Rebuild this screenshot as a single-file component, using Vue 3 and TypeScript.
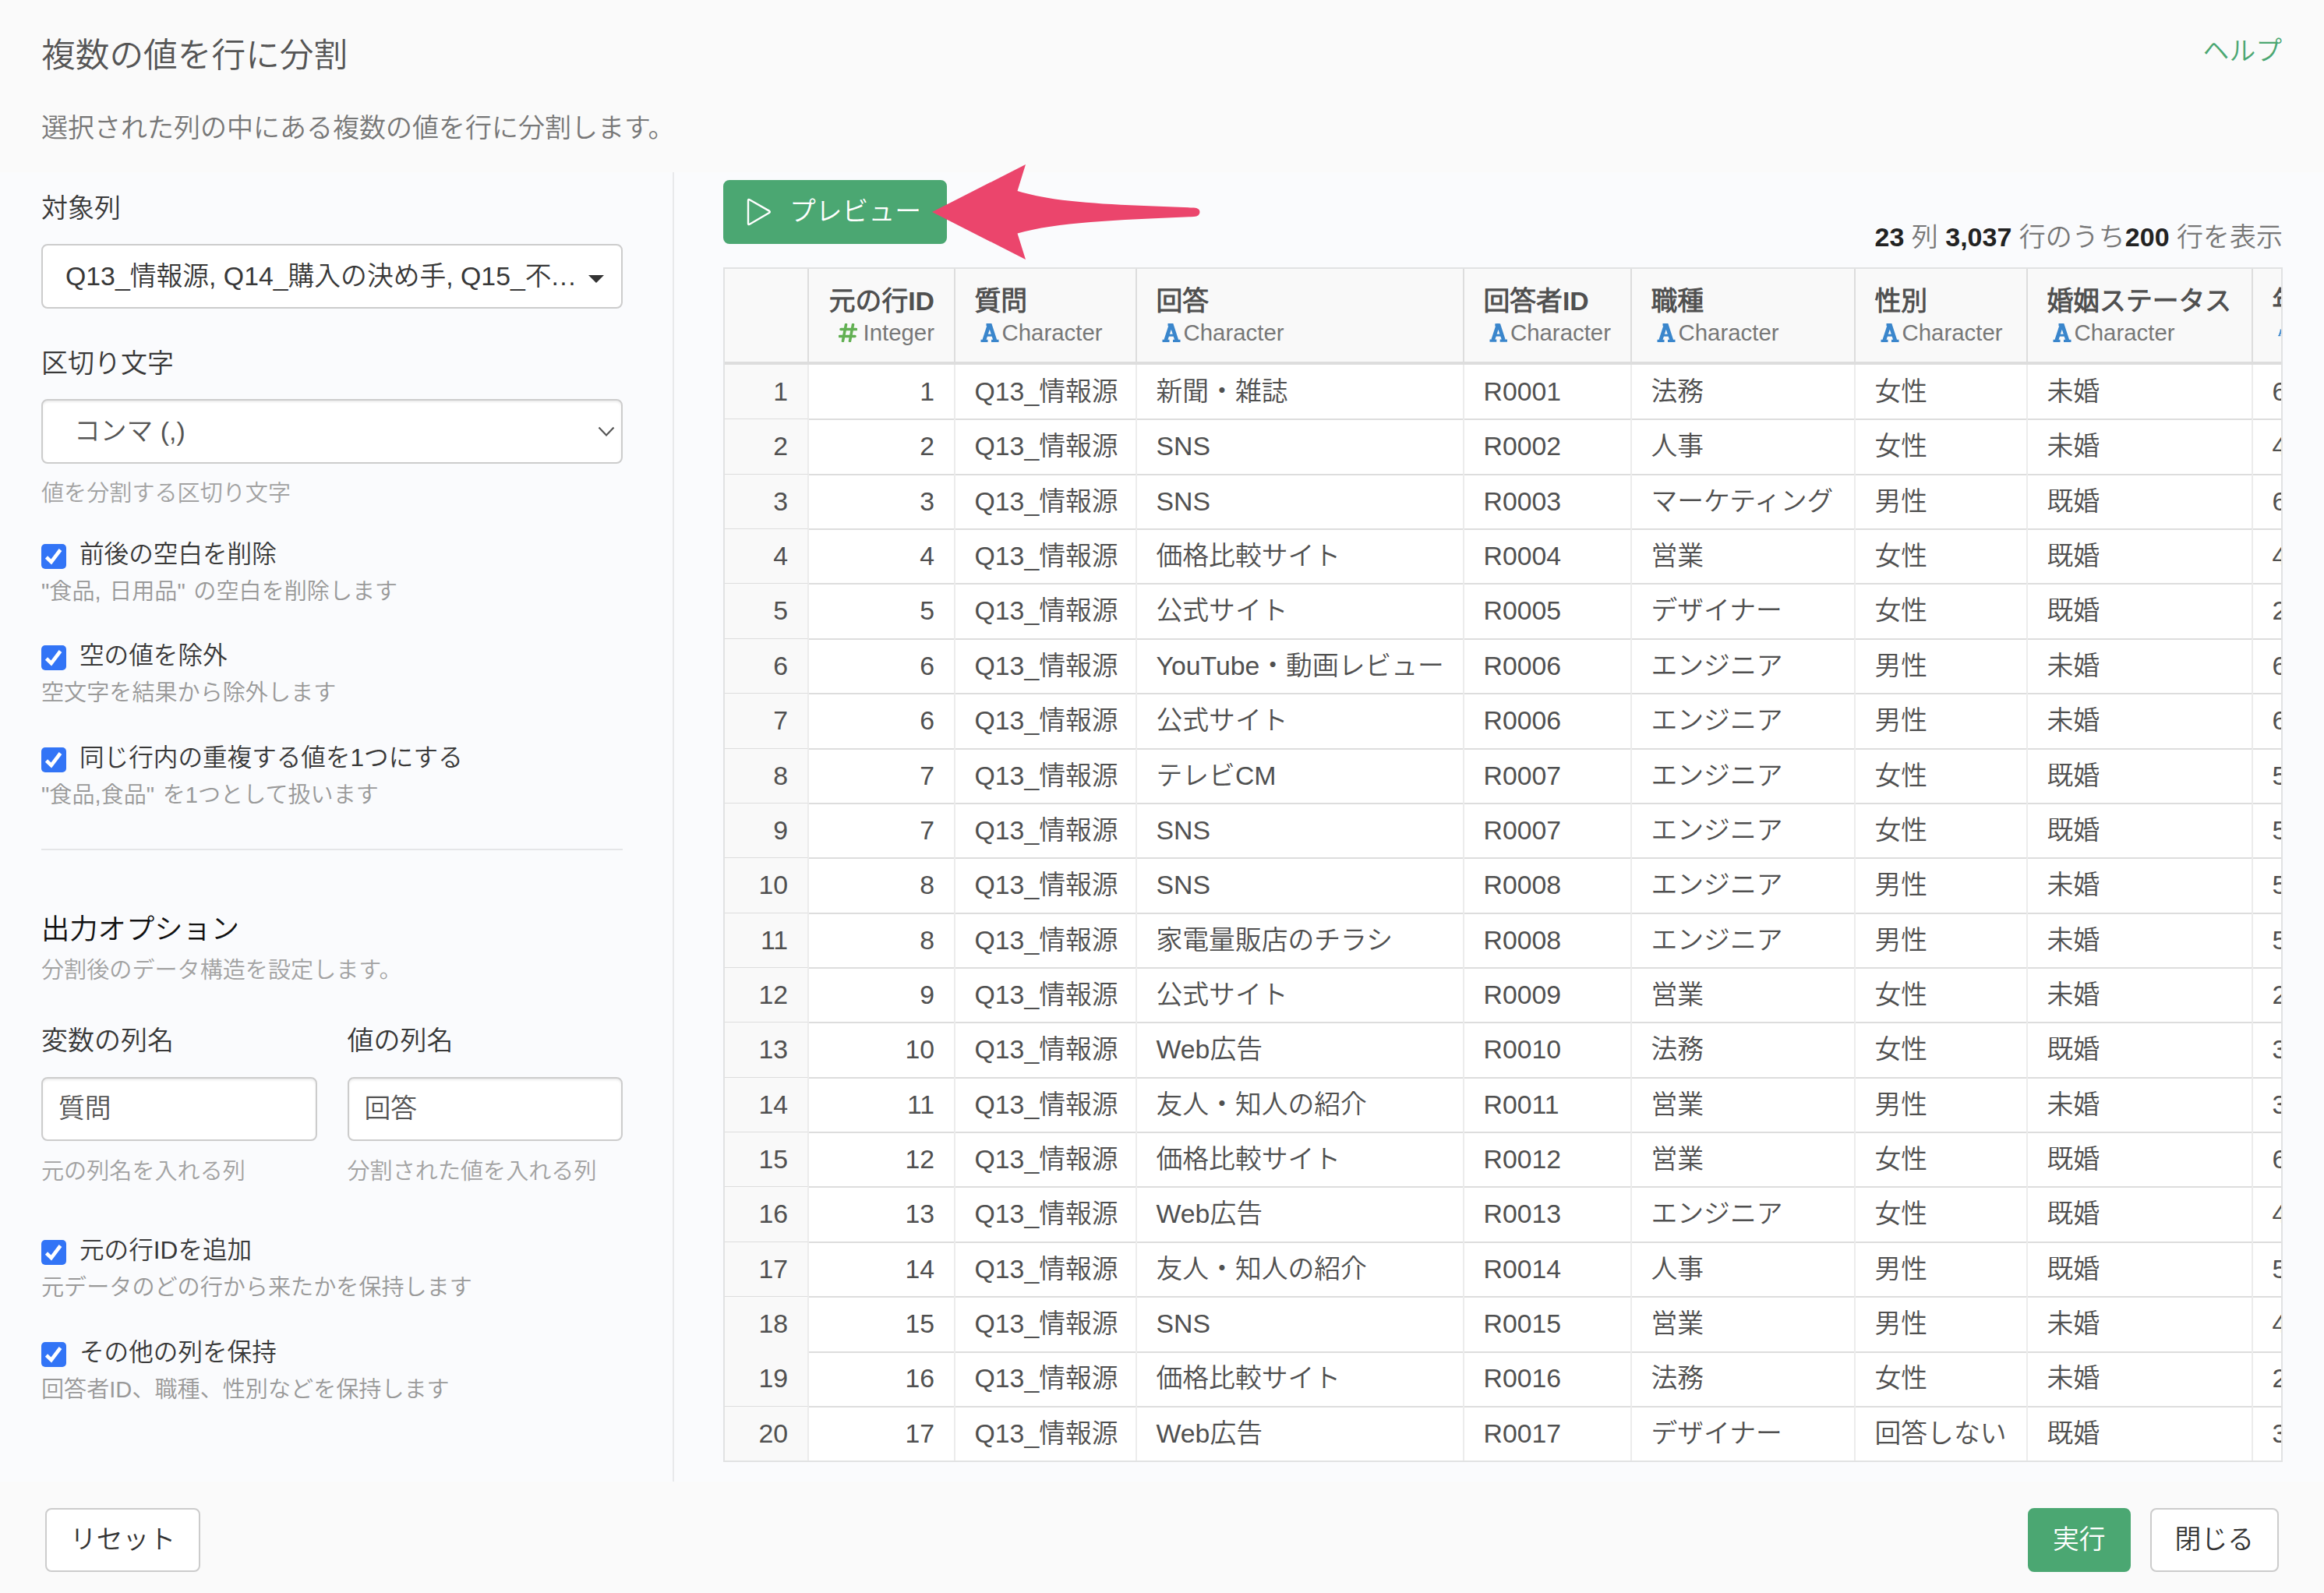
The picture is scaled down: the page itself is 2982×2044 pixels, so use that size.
<script setup lang="ts">
interface CheckOption {
  label: string
  hint: string
}
interface Column {
  name: string
  type: 'Integer' | 'Character'
}

const splitOptions: CheckOption[] = [
  { label: '前後の空白を削除', hint: '"食品, 日用品" の空白を削除します' },
  { label: '空の値を除外', hint: '空文字を結果から除外します' },
  { label: '同じ行内の重複する値を1つにする', hint: '"食品,食品" を1つとして扱います' },
]
const keepOptions: CheckOption[] = [
  { label: '元の行IDを追加', hint: '元データのどの行から来たかを保持します' },
  { label: 'その他の列を保持', hint: '回答者ID、職種、性別などを保持します' },
]
const nameFields = [
  { label: '変数の列名', value: '質問', hint: '元の列名を入れる列' },
  { label: '値の列名', value: '回答', hint: '分割された値を入れる列' },
]

const columns: Column[] = [
  { name: '元の行ID', type: 'Integer' },
  { name: '質問', type: 'Character' },
  { name: '回答', type: 'Character' },
  { name: '回答者ID', type: 'Character' },
  { name: '職種', type: 'Character' },
  { name: '性別', type: 'Character' },
  { name: '婚姻ステータス', type: 'Character' },
  { name: '年代', type: 'Character' },
]

const records: [number, string, string, string, string, string][] = [
  [1, '新聞・雑誌', '法務', '女性', '未婚', '60代'],
  [2, 'SNS', '人事', '女性', '未婚', '40代'],
  [3, 'SNS', 'マーケティング', '男性', '既婚', '60代'],
  [4, '価格比較サイト', '営業', '女性', '既婚', '40代'],
  [5, '公式サイト', 'デザイナー', '女性', '既婚', '20代'],
  [6, 'YouTube・動画レビュー', 'エンジニア', '男性', '未婚', '60代'],
  [6, '公式サイト', 'エンジニア', '男性', '未婚', '60代'],
  [7, 'テレビCM', 'エンジニア', '女性', '既婚', '50代'],
  [7, 'SNS', 'エンジニア', '女性', '既婚', '50代'],
  [8, 'SNS', 'エンジニア', '男性', '未婚', '50代'],
  [8, '家電量販店のチラシ', 'エンジニア', '男性', '未婚', '50代'],
  [9, '公式サイト', '営業', '女性', '未婚', '20代'],
  [10, 'Web広告', '法務', '女性', '既婚', '30代'],
  [11, '友人・知人の紹介', '営業', '男性', '未婚', '30代'],
  [12, '価格比較サイト', '営業', '女性', '既婚', '60代'],
  [13, 'Web広告', 'エンジニア', '女性', '既婚', '40代'],
  [14, '友人・知人の紹介', '人事', '男性', '既婚', '50代'],
  [15, 'SNS', '営業', '男性', '未婚', '40代'],
  [16, '価格比較サイト', '法務', '女性', '未婚', '20代'],
  [17, 'Web広告', 'デザイナー', '回答しない', '既婚', '30代'],
]
const rows = records.map(([id, answer, job, gender, marital, age]) => [
  String(id),
  'Q13_情報源',
  answer,
  'R' + String(id).padStart(4, '0'),
  job,
  gender,
  marital,
  age,
])
</script>

<template>
  <div class="dialog">
    <header class="head">
      <div>
        <h1 class="title">複数の値を行に分割</h1>
        <p class="lead">選択された列の中にある複数の値を行に分割します。</p>
      </div>
      <a class="help">ヘルプ</a>
    </header>

    <main class="body">
      <section class="settings">
        <div class="label">対象列</div>
        <div class="control dropdown">
          <span>Q13_情報源, Q14_購入の決め手, Q15_不<span class="dots">...</span></span>
          <svg class="caret" viewBox="0 0 20 10"><path d="M0 0H20L10 10Z" fill="#333" /></svg>
        </div>

        <div class="label second">区切り文字</div>
        <div class="control select inset">
          <span>コンマ (,)</span>
          <svg class="chevron" viewBox="0 0 22 14">
            <path d="M1.5 1.5L11 11.5L20.5 1.5" fill="none" stroke="#555" stroke-width="2.2" />
          </svg>
        </div>
        <div class="hint under-select">値を分割する区切り文字</div>

        <div class="checks">
          <div v-for="o in splitOptions" :key="o.label" class="check">
            <div class="check-row">
              <span class="box">
                <svg viewBox="0 0 32 32"><path d="M6.500 17L12.800 23L24.500 7.500" /></svg>
              </span>
              <span>{{ o.label }}</span>
            </div>
            <div class="hint">{{ o.hint }}</div>
          </div>
        </div>

        <div class="rule"></div>
        <h2 class="group">出力オプション</h2>
        <div class="hint group-hint">分割後のデータ構造を設定します。</div>

        <div class="fields">
          <div v-for="f in nameFields" :key="f.label" class="field">
            <div class="label">{{ f.label }}</div>
            <div class="control input inset">{{ f.value }}</div>
            <div class="hint">{{ f.hint }}</div>
          </div>
        </div>

        <div class="checks keep">
          <div v-for="o in keepOptions" :key="o.label" class="check">
            <div class="check-row">
              <span class="box">
                <svg viewBox="0 0 32 32"><path d="M6.500 17L12.800 23L24.500 7.500" /></svg>
              </span>
              <span>{{ o.label }}</span>
            </div>
            <div class="hint">{{ o.hint }}</div>
          </div>
        </div>
      </section>

      <section class="result">
        <div class="toolbar">
          <div class="btn primary preview">
            <svg class="play" viewBox="0 0 32 36">
              <path d="M2 3.2Q2 1.2 3.8 2.2L29 16.6Q30.6 17.8 29 19L3.8 33.8Q2 34.8 2 32.8Z" />
            </svg>
            <span>プレビュー</span>
            <svg class="arrow" viewBox="0 0 344 122">
              <path
                d="M0 61L120 0L109.5 34C160 50 240 52 336 55.5Q343.5 56 343.5 61Q343.5 66.500 336 67C240 71 160 74 109.500 88.500L120 122Z"
              />
            </svg>
          </div>
          <div class="count"><b>23</b> 列 <b>3,037</b> 行のうち<b>200</b> 行を表示</div>
        </div>

        <div class="grid">
          <div class="tr th">
            <div class="td"></div>
            <div v-for="(c, i) in columns" :key="c.name" class="td" :class="{ num: i === 0 }">
              <div class="name">{{ c.name }}</div>
              <div class="type">
                <svg v-if="c.type === 'Integer'" class="hash" viewBox="0 0 24 24">
                  <path d="M9.500 1.500L5.500 22.500M18.500 1.500L14.500 22.500M3 7.500H22.500M1.500 16.500H21" />
                </svg>
                <!-- slab "font" icon for text columns -->
                <svg v-else class="alpha" viewBox="0 0 24 24">
                  <path class="stem" d="M4.800 21.500L11 2.500H12.600L18.800 21.500" />
                  <path class="bar" d="M7.500 15.200H16.500" />
                  <path class="slab" d="M0.500 22.300H9.500M14 22.300H23.500M7.500 1.700H13" />
                </svg>
                <span>{{ c.type }}</span>
              </div>
            </div>
          </div>
          <div v-for="(r, n) in rows" :key="n" class="tr">
            <div class="td">{{ n + 1 }}</div>
            <div v-for="(v, i) in r" :key="i" class="td" :class="{ num: i === 0 }">{{ v }}</div>
          </div>
        </div>
      </section>
    </main>

    <footer class="foot">
      <div class="btn">リセット</div>
      <div class="foot-right">
        <div class="btn primary">実行</div>
        <div class="btn">閉じる</div>
      </div>
    </footer>
  </div>
</template>

<style>
body {
  margin: 0;
  background: #fafafa;
}
</style>

<style scoped>
.dialog {
  width: 2982px;
  height: 2044px;
  box-sizing: border-box;
  overflow: hidden;
  display: flex;
  flex-direction: column;
  background: #fafafa;
  color: #383838;
  font-family: 'Liberation Sans', 'Noto Sans CJK JP DemiLight', 'Noto Sans CJK JP', sans-serif;
  font-weight: 350;
  font-size: 33.8px;
  white-space: nowrap;
}
.dialog * {
  box-sizing: border-box;
}
.head {
  height: 221px;
  padding: 41px 54px 0 53px;
  display: flex;
  justify-content: space-between;
  align-items: flex-start;
}
.title {
  margin: 0;
  font-size: 43.7px;
  line-height: 60px;
  font-weight: 350;
  color: #555;
}
.lead {
  margin: 39px 0 0;
  font-size: 34px;
  line-height: 48px;
  color: #777;
}
.help {
  line-height: 48px;
  color: #4ba772;
}
.body {
  height: 1680px;
  display: flex;
  background: #fafbfd;
}
.settings {
  width: 865px;
  padding: 22.5px 64px 0 53px;
  border-right: 2px solid #e8e9eb;
}
.label {
  line-height: 46px;
  font-size: 34px;
}
.label.second {
  margin-top: 46.5px;
}
.control {
  height: 83px;
  border: 2px solid #ccc;
  border-radius: 8px;
  background: #fff;
  display: flex;
  align-items: center;
  justify-content: space-between;
  line-height: 44px;
}
.control > span {
  padding-bottom: 1px;
}
.inset {
  color: #555;
  box-shadow: inset 0 2px 3px rgba(0, 0, 0, 0.075);
}
.dropdown {
  margin-top: 23.5px;
  padding: 0 22px 0 29px;
}
.dots {
  letter-spacing: 1.4px;
}
.caret {
  width: 20px;
  height: 10px;
  margin-top: 6px;
}
.select {
  margin-top: 23.5px;
  padding: 0 8px 0 40px;
}
.chevron {
  width: 22px;
  height: 14px;
}
.hint {
  font-size: 29.1px;
  line-height: 40px;
  word-spacing: 2.5px;
  color: #999;
}
.under-select {
  margin-top: 18px;
  color: #a2a2a2;
}
.checks {
  margin-top: 35.5px;
  display: flex;
  flex-direction: column;
  gap: 40.5px;
}
.check-row {
  display: flex;
  gap: 17px;
  line-height: 44px;
  font-size: 31.6px;
  margin-bottom: 6px;
}
.box {
  width: 32px;
  height: 32px;
  margin-top: 9px;
  border-radius: 5px;
  background: #3274f6;
  line-height: 0;
}
.box path {
  fill: none;
  stroke: #fff;
  stroke-width: 4.6;
  stroke-linecap: butt;
  stroke-linejoin: miter;
}
.rule {
  height: 2px;
  margin-top: 49.5px;
  background: #e5e6e8;
}
.group {
  margin: 78px 0 0;
  font-size: 36.3px;
  line-height: 48px;
  font-weight: 350;
  color: #111;
}
.group-hint {
  margin-top: 8px;
  color: #a2a2a2;
}
.fields {
  margin-top: 46.5px;
  display: flex;
  gap: 39px;
}
.field {
  flex: 1;
}
.input {
  height: 82.5px;
  margin-top: 24px;
  padding: 0 20px 1px;
}
.field .hint {
  margin-top: 18.5px;
  color: #a2a2a2;
}
.keep {
  margin-top: 59.5px;
}
.result {
  width: 2117px;
  padding: 10px 53px 0 63px;
}
.toolbar {
  height: 112px;
  display: flex;
  justify-content: space-between;
  align-items: flex-start;
}
.btn {
  height: 82px;
  border: 2px solid #ccc;
  border-radius: 8px;
  background: #fff;
  display: flex;
  align-items: center;
  justify-content: center;
  padding: 0 30px 2px;
  line-height: 44px;
  color: #333;
}
.primary {
  background: #4ba772;
  border-color: #4ba772;
  color: #fff;
}
.preview {
  position: relative;
  width: 287px;
  justify-content: flex-start;
  padding: 0 0 3px 28px;
  gap: 23px;
}
.play {
  width: 32px;
  height: 36px;
  margin-top: 3px;
}
.play path {
  fill: none;
  stroke: #fff;
  stroke-width: 2.4;
}
/* callout arrow that overlaps the button's right edge */
.arrow {
  position: absolute;
  left: 266px;
  top: -22px;
  width: 344px;
  height: 122px;
}
.arrow path {
  fill: #eb456c;
}
.count {
  margin-top: 49.5px;
  font-size: 34px;
  line-height: 46px;
  color: #777;
}
.count b {
  font-weight: 700;
  color: #222;
}
.grid {
  height: 1533px;
  border: 2px solid #e1e2e3;
  background: #fff;
  overflow: hidden;
  color: #505050;
}
.tr {
  display: grid;
  grid-template-columns: 108px 188px 233px 420px 215px 287px 221px 289px 200px;
  height: 70.37px;
}
.td {
  padding: 0 25px 0 24.5px;
  line-height: 69.4px;
  border-right: 2px solid #ececec;
  border-bottom: 2px solid #ddd;
}
.td:first-child {
  background: #f9f9f9;
  text-align: right;
}
.td.num {
  text-align: right;
}
.th {
  height: 123px;
}
.th .td {
  background: #f9f9f9;
  border-right-color: #ddd;
  border-bottom-width: 4px;
  padding-top: 18px;
}
.name {
  font-weight: 700;
  line-height: 46px;
}
.type {
  display: flex;
  align-items: center;
  height: 34px;
  margin-top: 1px;
  line-height: 34px;
  font-size: 29.4px;
  color: #777;
  padding-left: 7px;
}
.num .type {
  justify-content: flex-end;
}
.hash {
  width: 24px;
  height: 24px;
  margin: 0 7px 1px 0;
}
.hash path {
  fill: none;
  stroke: #62b053;
  stroke-width: 3.6;
  stroke-linecap: round;
}
.alpha {
  width: 24px;
  height: 24px;
  margin: 0 4px 1px 0;
}
.alpha path {
  fill: none;
  stroke: #3a86cc;
}
.alpha .stem {
  stroke-width: 4.8;
}
.alpha .bar {
  stroke-width: 3;
}
.alpha .slab {
  stroke-width: 3.2;
}
.foot {
  height: 143px;
  padding: 34px 58px 0 58px;
  display: flex;
  justify-content: space-between;
  align-items: flex-start;
}
.foot-right {
  display: flex;
  gap: 25px;
}
</style>
